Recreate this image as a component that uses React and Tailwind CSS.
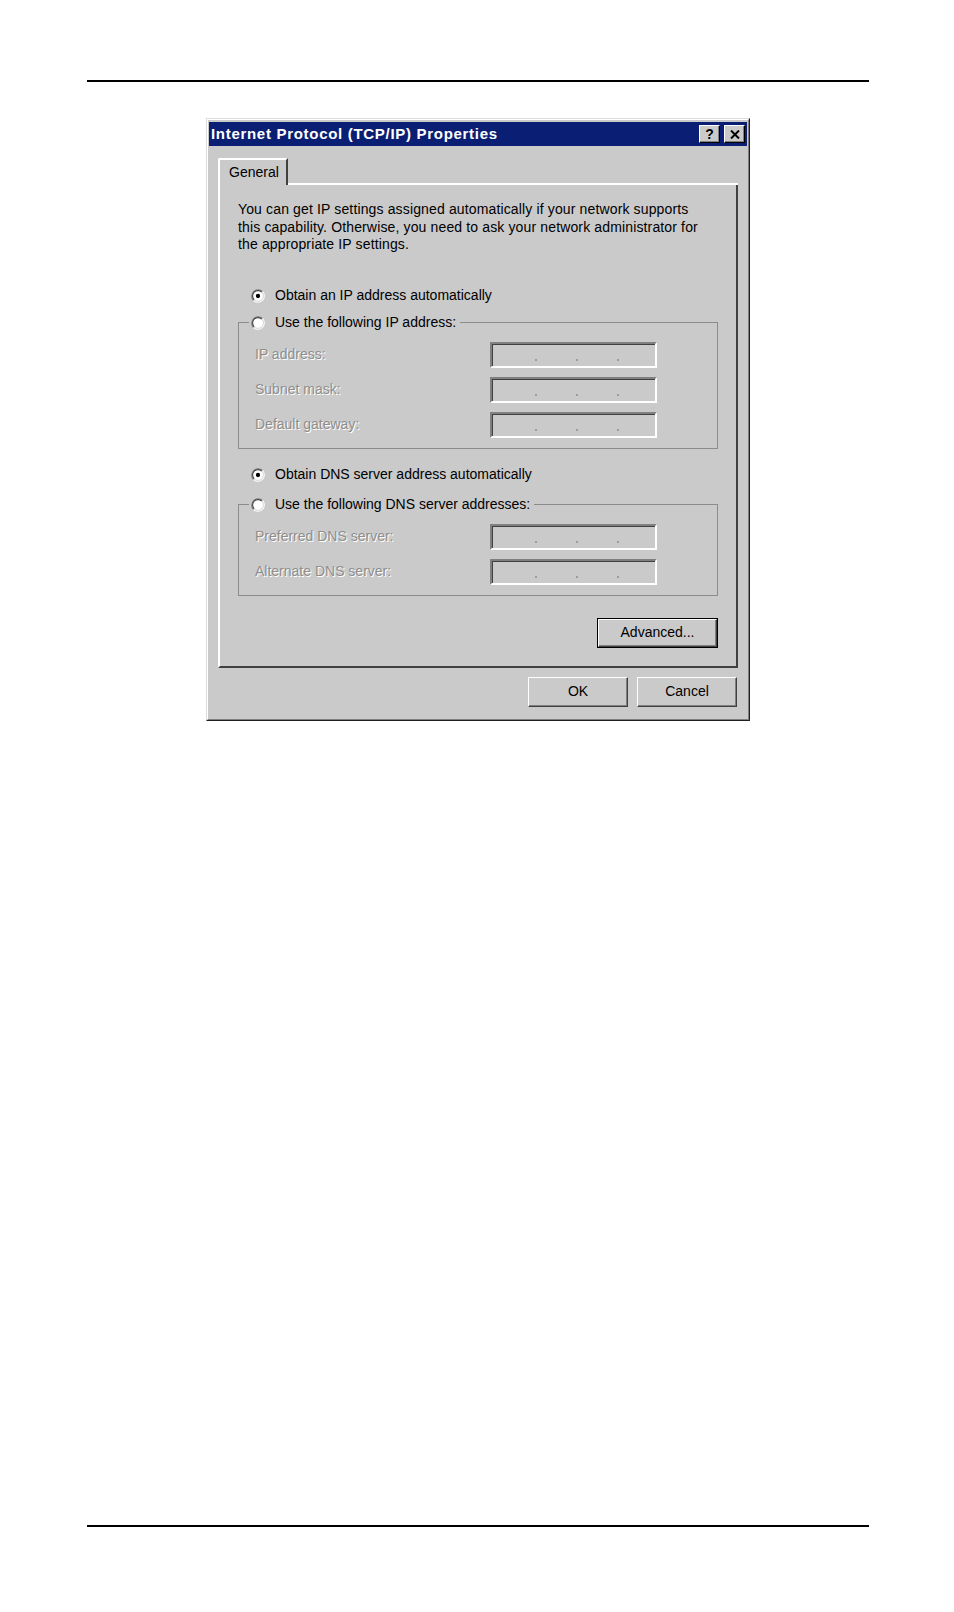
import React from 'react'

const font = "font-['Liberation_Sans',Arial,sans-serif]"
const disabled = 'text-[#8e8e8e] [text-shadow:1px_1px_0_#ffffff]'

function Radio({ checked }) {
  return (
    <svg width="14" height="14" viewBox="0 0 13 13" className="shrink-0">
      <circle cx="6.5" cy="6.5" r="5" fill="#ffffff" />
      <path d="M2.26 10.74 A6 6 0 0 1 10.74 2.26" stroke="#808080" fill="none" />
      <path d="M10.74 2.26 A6 6 0 0 1 2.26 10.74" stroke="#ffffff" fill="none" />
      <path d="M2.96 10.04 A5 5 0 0 1 10.04 2.96" stroke="#404040" fill="none" />
      <path d="M10.04 2.96 A5 5 0 0 1 2.96 10.04" stroke="#dedede" fill="none" />
      {checked && <circle cx="6.5" cy="6.5" r="2" fill="#000000" />}
    </svg>
  )
}

function RadioRow({ label, checked }) {
  return (
    <div className="h-[20px] flex items-center gap-[10px] pl-[13px] text-[14px] text-black">
      <Radio checked={checked} />
      <span>{label}</span>
    </div>
  )
}

function IpBox() {
  return (
    <div className="w-[167px] h-[26px] border-2 border-t-[#808080] border-l-[#808080] border-b-white border-r-white shadow-[inset_1px_1px_0_#404040] flex items-end pb-[5px] pl-[43px] gap-[39px]">
      <span className="w-[2px] h-[2px] bg-[#9c9c9c]" />
      <span className="w-[2px] h-[2px] bg-[#9c9c9c]" />
      <span className="w-[2px] h-[2px] bg-[#9c9c9c]" />
    </div>
  )
}

function Field({ label }) {
  return (
    <div className="flex items-center pl-[16px]">
      <span className={`w-[235px] text-[14px] ${disabled}`}>{label}</span>
      <IpBox />
    </div>
  )
}

function Group({ legend, fields, className = '' }) {
  return (
    <fieldset className={`border border-[#8c8c8c] pb-[10px] ${className}`}>
      <legend className="ml-[10px] pl-[2px] pr-[4px] h-[20px] flex items-center gap-[10px] text-[14px] text-black">
        <Radio checked={false} />
        <span>{legend}</span>
      </legend>
      <div className="pt-[9px] flex flex-col gap-[9px]">
        {fields.map(f => <Field key={f} label={f} />)}
      </div>
    </fieldset>
  )
}

function WinButton({ children, isDefault, className = '' }) {
  const inner = (
    <div className="h-full w-full border-t border-l border-t-white border-l-white border-b border-r border-b-[#404040] border-r-[#404040] shadow-[inset_-1px_-1px_0_#808080] flex items-center justify-center text-[14px] text-black">
      {children}
    </div>
  )
  return isDefault
    ? <div className={`border border-black ${className}`}>{inner}</div>
    : <div className={className}>{inner}</div>
}

export default function App() {
  return (
    <div className={`w-[954px] h-[1612px] bg-white flex flex-col ${font}`}>
      <div className="mt-[80px] ml-[87px] w-[782px] h-[2px] bg-black" />

      {/* Dialog */}
      <div className="mt-[36px] ml-[206px] w-[544px] border border-t-[#dcdcdc] border-l-[#dcdcdc] border-b-[#202020] border-r-[#202020] bg-[#cacaca]">
        <div className="border border-t-white border-l-white border-b-[#808080] border-r-[#808080] pt-[2px] px-[1px] pb-[12px]">
          {/* Title bar */}
          <div className="h-[24px] bg-[#0a1f74] flex items-center justify-between pl-[2px] pr-[2px]">
            <span className="text-white font-bold text-[15px] tracking-[0.7px]">Internet Protocol (TCP/IP) Properties</span>
            <div className="flex gap-[4px]">
              <div className="w-[21px] h-[18px] bg-[#cacaca] border border-t-white border-l-white border-b-black border-r-black shadow-[inset_-1px_-1px_0_#808080] flex items-center justify-center text-[14px] font-bold text-black leading-none">?</div>
              <div className="w-[21px] h-[18px] bg-[#cacaca] border border-t-white border-l-white border-b-black border-r-black shadow-[inset_-1px_-1px_0_#808080] flex items-center justify-center">
                <svg width="10" height="9" viewBox="0 0 10 9">
                  <path d="M1 0.5 L9 8.5 M9 0.5 L1 8.5" stroke="#000" strokeWidth="2" />
                </svg>
              </div>
            </div>
          </div>

          <div className="px-[9px] pt-[12px]">
            {/* Tab strip */}
            <div className="flex h-[27px]">
              <div className="w-[70px] border-l-2 border-t-2 border-l-white border-t-white border-r-2 border-r-[#404040] rounded-tl-[2px] flex items-center pl-[9px] text-[14px] text-black">
                General
              </div>
              <div className="flex-1 border-b-2 border-b-white" />
            </div>

            {/* Tab panel */}
            <div className="border-l-2 border-l-white border-r-2 border-r-[#404040] border-b-2 border-b-[#404040] pl-[18px] pr-[18px] pt-[16px] pb-[18px]">
              <p className="text-[14px] leading-[17.5px] tracking-[0.14px] text-black whitespace-nowrap">
                You can get IP settings assigned automatically if your network supports<br />
                this capability. Otherwise, you need to ask your network administrator for<br />
                the appropriate IP settings.
              </p>

              <div className="mt-[32px]">
                <RadioRow label="Obtain an IP address automatically" checked />
              </div>
              <Group className="mt-[7px]" legend="Use the following IP address:" fields={['IP address:', 'Subnet mask:', 'Default gateway:']} />

              <div className="mt-[16px]">
                <RadioRow label="Obtain DNS server address automatically" checked />
              </div>
              <Group className="mt-[10px]" legend="Use the following DNS server addresses:" fields={['Preferred DNS server:', 'Alternate DNS server:']} />

              <div className="flex justify-end mt-[22px]">
                <WinButton isDefault className="w-[121px] h-[30px]">Advanced...</WinButton>
              </div>
            </div>

            {/* Dialog buttons */}
            <div className="flex justify-end gap-[9px] mt-[9px] pr-[1px]">
              <WinButton className="w-[100px] h-[30px]">OK</WinButton>
              <WinButton className="w-[100px] h-[30px]">Cancel</WinButton>
            </div>
          </div>
        </div>
      </div>

      <div className="mt-auto mb-[85px] ml-[87px] w-[782px] h-[2px] bg-black" />
    </div>
  )
}
